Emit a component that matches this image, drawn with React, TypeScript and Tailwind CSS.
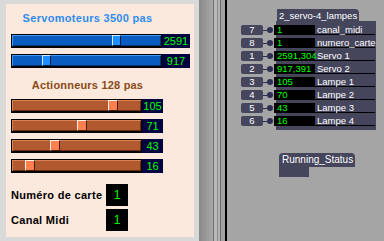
const SERVOS = [
  { value: 2591, thumb: 100 },
  { value: 917, thumb: 30 },
]

const LAMPS = [105, 71, 43, 16]

const PORTS = [
  { n: 7, v: '1', label: 'canal_midi' },
  { n: 8, v: '1', label: 'numero_carte' },
  { n: 1, v: '2591,304', label: 'Servo 1' },
  { n: 2, v: '917,391', label: 'Servo 2' },
  { n: 3, v: '105', label: 'Lampe 1' },
  { n: 4, v: '70', label: 'Lampe 2' },
  { n: 5, v: '43', label: 'Lampe 3' },
  { n: 6, v: '16', label: 'Lampe 4' },
]

function ServoSlider({ value, thumb }: { value: number; thumb: number }) {
  return (
    <div className="flex h-[14px]">
      <div className="relative h-full w-[151px] border border-b-2 border-black bg-[#0a5cc0] shadow-[inset_1px_1px_0_#3c9aff,inset_-1px_-1px_0_#003578]">
        <div
          className="absolute top-0 bottom-0 w-[9px] border border-t-[#d4eaff] border-l-[#d4eaff] border-r-[#001c44] border-b-[#001c44] bg-[#1e8fff]"
          style={{ left: thumb }}
        />
      </div>
      <div className="flex h-full w-[28px] items-center justify-center bg-[#000040] text-[11px] text-[#00ff00]">
        {value}
      </div>
    </div>
  )
}

function LampSlider({ value }: { value: number }) {
  // thumb travels 120px over 0..128
  const left = Math.round((value / 128) * 120) - 2
  return (
    <div className="flex h-[14px]">
      <div className="relative h-full w-[131px] border border-b-2 border-black bg-[#b25a2f] shadow-[inset_1px_1px_0_#d98456,inset_-1px_-1px_0_#6a2d10]">
        <div
          className="absolute top-0 bottom-0 w-[10px] border border-t-[#fff0e6] border-l-[#fff0e6] border-r-[#4a1c04] border-b-[#4a1c04] bg-[#ff7f4e]"
          style={{ left }}
        />
      </div>
      <div className="flex h-full w-[21px] items-center justify-center bg-[#000040] text-[11px] text-[#00ff00]">
        {value}
      </div>
    </div>
  )
}

function NumberField({ label, value }: { label: string; value: string }) {
  return (
    <div className="flex h-[22px] items-center">
      <div className="w-[95px] text-[11px] font-bold tracking-[0.3px] text-black">{label}</div>
      <div className="flex h-[22px] w-[22px] items-center justify-center bg-black text-[12px] text-[#00ff00]">
        {value}
      </div>
    </div>
  )
}

function ControlPanel() {
  return (
    <div className="h-[233px] w-[188px] bg-[#fbe9dd] pt-[8px]">
      <div className="h-[13px] w-[163px] text-center text-[11px] leading-[13px] font-bold tracking-[0.3px] text-[#2f8cef]">
        Servomoteurs 3500 pas
      </div>
      <div className="mt-[9px] flex flex-col gap-[6px] pl-[5px]">
        {SERVOS.map((s) => (
          <ServoSlider key={s.value} value={s.value} thumb={s.thumb} />
        ))}
      </div>
      <div className="mt-[11px] h-[13px] w-[163px] text-center text-[11px] leading-[13px] font-bold tracking-[0.2px] text-[#8b4a16]">
        Actionneurs 128 pas
      </div>
      <div className="mt-[7px] flex flex-col gap-[6px] pl-[5px]">
        {LAMPS.map((v) => (
          <LampSlider key={v} value={v} />
        ))}
      </div>
      <div className="mt-[11px] flex flex-col gap-[3px] pl-[5px]">
        <NumberField label="Numéro de carte" value="1" />
        <NumberField label="Canal Midi" value="1" />
      </div>
    </div>
  )
}

function Splitter() {
  return (
    <div className="flex h-full">
      <div className="w-[14px] bg-gradient-to-r from-[#898989] to-[#a9a9a9]" />
      <div className="w-px bg-[#6c6c6c]" />
      <div className="w-[3px] bg-[#bababa]" />
      <div className="w-px bg-[#8c8c8c]" />
      <div className="w-[2px] bg-[#b2b2b2]" />
      <div className="w-px bg-[#6c6c6c]" />
      <div className="w-[4px] bg-[#a2a2a2]" />
      <div className="w-[2px] bg-black" />
    </div>
  )
}

function Patcher() {
  return (
    <div className="relative h-full flex-1 bg-[#a5a5a5] text-[9.5px] text-white">
      {/* subpatcher object */}
      <div className="absolute top-[9px] left-[50px] h-[13px] w-[82px] rounded-tr-[4px] bg-[#45455c] pl-[2px] leading-[13px]">
        2_servo-4_lampes
      </div>
      <div className="absolute top-[21px] left-[49px] h-[109px] w-[100px] bg-[#45455c]" />
      <div className="absolute top-[25px] left-[14px] flex flex-col">
        {PORTS.map((p) => (
          <div key={p.label} className="flex h-[13px] items-start">
            <div className="flex h-[10px] w-[22px] items-center justify-center rounded-[2px] bg-[#45455c] leading-[10px]">
              {p.n}
            </div>
            <div className="flex h-[10px] items-center">
              <div className="h-px w-[4px] bg-[#2e2e50]" />
              <div className="size-[6px] rounded-full bg-[#2e2e52]" />
            </div>
            <div className="ml-px h-[10px] w-[41px] bg-black pl-[3px] leading-[10px] text-[#00ff00]">
              {p.v}
            </div>
            <div className="h-[10px] w-[60px] border-b border-black pl-[2px] leading-[10px]">
              {p.label}
            </div>
          </div>
        ))}
      </div>
      {/* Running_Status */}
      <div className="absolute top-[153px] left-[52px] h-[14px] w-[76px] rounded-t-[4px] bg-[#45455c] pl-[3px] text-[10px] leading-[14px]">
        Running_Status
      </div>
      <div className="absolute top-[167px] left-[52px] h-[10px] w-[30px] bg-[#45455c]" />
    </div>
  )
}

export default function App() {
  return (
    <div className="flex h-[241px] w-[384px] overflow-hidden bg-[#d9d9d9] font-['Liberation_Sans',Arial,sans-serif]">
      <div className="pt-[4px] pr-[5px] pl-[6px]">
        <ControlPanel />
      </div>
      <Splitter />
      <Patcher />
    </div>
  )
}
